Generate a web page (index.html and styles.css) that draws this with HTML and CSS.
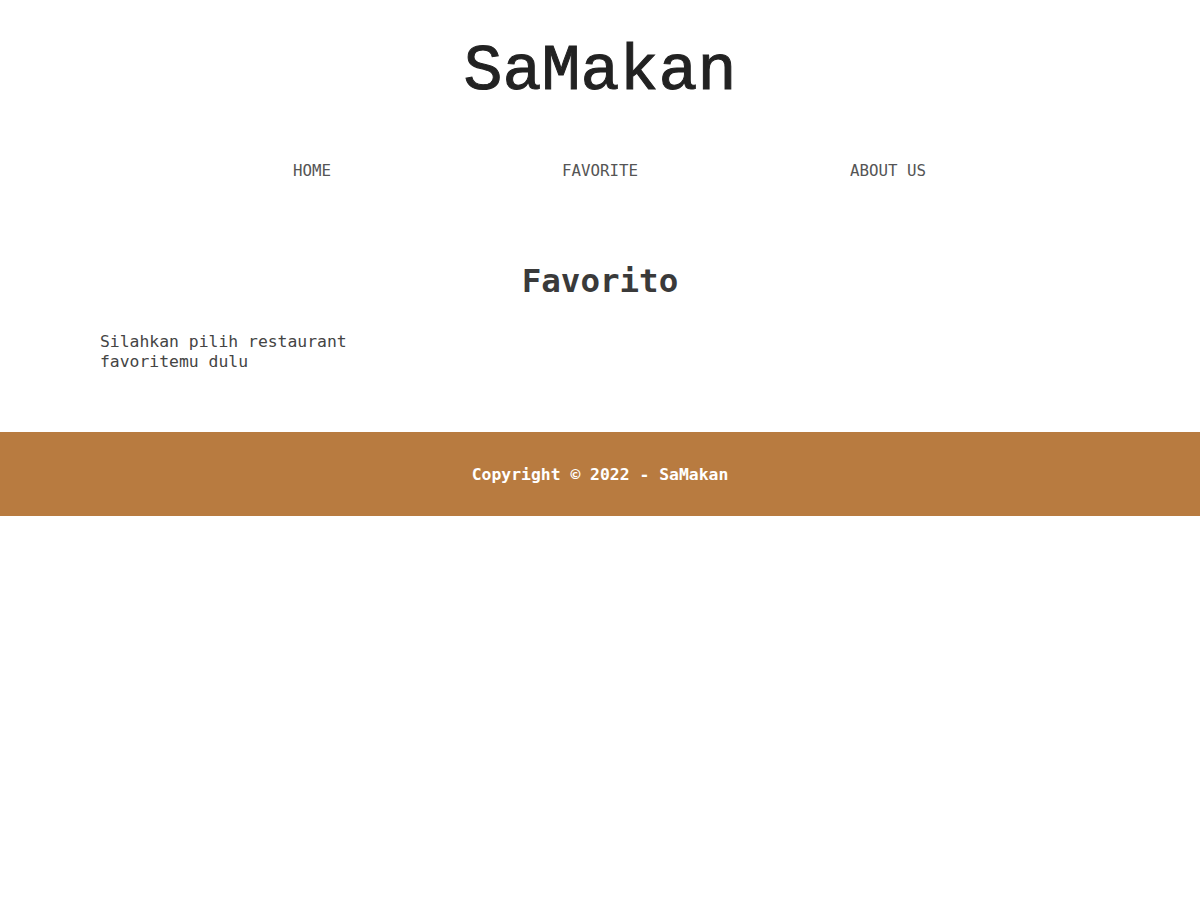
FILE: index.html
```html
<!DOCTYPE html>
<html lang="id">
<head>
<meta charset="utf-8">
<title>SaMakan</title>
<link rel="stylesheet" href="styles.css">
</head>
<body>
<header class="header">
  <h1 class="brand">SaMakan</h1>
  <nav class="nav">
    <a class="nav-link" href="#">HOME</a>
    <a class="nav-link" href="#">FAVORITE</a>
    <a class="nav-link" href="#">ABOUT US</a>
  </nav>
</header>
<main class="main">
  <h2 class="title">Favorito</h2>
  <div class="list">
    <p class="empty">Silahkan pilih restaurant favoritemu dulu</p>
  </div>
</main>
<footer class="footer">
  <p class="copy">Copyright © 2022 - SaMakan</p>
</footer>
</body>
</html>
```
FILE: styles.css
```css
* { box-sizing: border-box; }
body {
  margin: 0;
  font-family: "DejaVu Sans Mono", "Liberation Mono", monospace;
  background: #fff;
  color: #444;
}
.header {
  display: flex;
  flex-direction: column;
  align-items: center;
}
.brand {
  margin: 32px 0 0;
  font-family: "Liberation Mono", "DejaVu Sans Mono", monospace;
  font-size: 65px;
  line-height: 80px;
  font-weight: 400;
  color: #222;
  -webkit-text-stroke: 1px #222;
}
.nav {
  display: grid;
  grid-template-columns: repeat(3, 288px);
  margin-top: 48px;
}
.nav-link {
  text-align: center;
  font-size: 15.8px;
  line-height: 22px;
  color: #555;
  text-decoration: none;
}
.main {
  padding: 79px 100px 60px;
}
.title {
  margin: 0;
  text-align: center;
  font-size: 32.5px;
  line-height: 40px;
  font-weight: 700;
  color: #3a3a3a;
}
.list {
  display: grid;
  grid-template-columns: repeat(3, 260px);
  margin-top: 31px;
}
.empty {
  margin: 0;
  font-size: 16.4px;
  line-height: 20px;
  color: #444;
}
.footer {
  background: #b87b40;
  height: 84px;
  display: flex;
  align-items: center;
  justify-content: center;
}
.copy {
  margin: 0;
  color: #fff;
  font-size: 16.4px;
  font-weight: 700;
}
```
